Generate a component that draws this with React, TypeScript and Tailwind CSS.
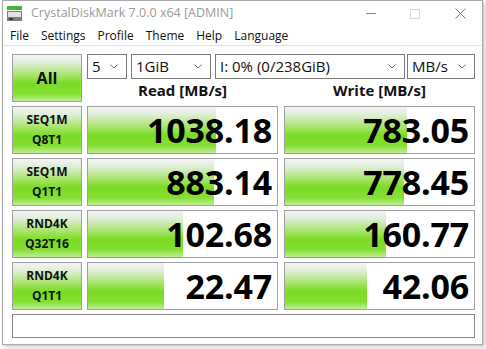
import React from 'react'

const font = { fontFamily: '"Open Sans", "Noto Sans", sans-serif' }

const green =
  'bg-[linear-gradient(to_bottom,#f4f4f4_0%,#e0eed8_16%,#a6e468_44%,#7bdc24_62%,#84df33_84%,#bdee92_100%)]'

type Row = { a: string; b: string; read: string; write: string; rw: number; ww: number }

const rows: Row[] = [
  { a: 'SEQ1M', b: 'Q8T1', read: '1038.18', write: '783.05', rw: 128, ww: 122 },
  { a: 'SEQ1M', b: 'Q1T1', read: '883.14', write: '778.45', rw: 126, ww: 119 },
  { a: 'RND4K', b: 'Q32T16', read: '102.68', write: '160.77', rw: 95, ww: 101 },
  { a: 'RND4K', b: 'Q1T1', read: '22.47', write: '42.06', rw: 76, ww: 82 },
]

function Chevron() {
  return (
    <svg width="8" height="5" viewBox="0 0 8 5" className="shrink-0">
      <polyline points="0.5,0.5 4,4 7.5,0.5" fill="none" stroke="#707070" strokeWidth="1" />
    </svg>
  )
}

function Combo({ w, text, ml }: { w: string; text: string; ml: string }) {
  return (
    <div className={`${w} ${ml} h-[25px] border border-[#7a7a7a] bg-white flex items-center justify-between pl-[4px] pr-[8px] text-[15px] text-[#111]`}>
      <span>{text}</span>
      <Chevron />
    </div>
  )
}

function Value({ text, bar }: { text: string; bar: number }) {
  return (
    <div className="relative w-[191px] h-[48px] border border-[#a0a0a0] bg-white overflow-hidden">
      <div className={`absolute left-0 top-0 bottom-0 ${green}`} style={{ width: bar }} />
      <div className="relative h-full flex items-center justify-end pr-[5px] text-[34px] font-bold text-black leading-none tracking-[-0.2px]">
        {text}
      </div>
    </div>
  )
}

export default function App() {
  return (
    <div className="w-[486px] h-[349px] bg-white overflow-hidden" style={font}>
      <div className="ml-[2px] w-[481px] h-[345px] border border-[#a8a8a8] bg-white flex flex-col shadow-[2px_2px_4px_rgba(0,0,0,0.22)]">
        <div className="h-[22px] flex items-center relative">
          <svg width="15" height="15" viewBox="0 0 15 15" className="ml-[4px] mt-[2px]">
            <rect x="0" y="0" width="15" height="4" fill="#3fb72f" />
            <rect x="0" y="5" width="15" height="10" fill="#7d7d7d" />
            <rect x="1" y="6" width="13" height="5" fill="#e2e2e2" />
            <rect x="2" y="12" width="4" height="2" fill="#3a3a3a" />
          </svg>
          <span className="ml-[9px] mt-[3px] text-[12.5px] text-[#9a9a9a]">CrystalDiskMark 7.0.0 x64 [ADMIN]</span>
          <div className="ml-auto flex items-center mt-[3px]">
            <div className="w-[10px] h-px bg-[#8a8a8a]" />
            <div className="ml-[34px] w-[10px] h-[10px] border border-[#d6d6d6]" />
            <svg width="11" height="11" viewBox="0 0 11 11" className="ml-[35px] mr-[16px]">
              <path d="M0.5 0.5 L10.5 10.5 M10.5 0.5 L0.5 10.5" stroke="#777" strokeWidth="1" />
            </svg>
          </div>
        </div>
        <div className="h-[23px] border-b border-[#e2e2e2] flex items-center pt-[3px] text-[12px] text-[#111] pl-[7px] gap-x-[12px]">
          <span>File</span>
          <span>Settings</span>
          <span>Profile</span>
          <span>Theme</span>
          <span>Help</span>
          <span>Language</span>
        </div>
        <div className="pl-[9px] pt-[8px] flex flex-col gap-y-[4px]">
          <div className="flex gap-x-[5px]">
            <div className={`w-[70px] h-[48px] border border-[#a0a0a0] ${green} flex items-center justify-center text-[16px] font-bold text-[#111]`}>
              All
            </div>
            <div className="w-[388px] flex flex-col">
              <div className="flex">
                <Combo w="w-[40px]" ml="" text="5" />
                <Combo w="w-[80px]" ml="ml-[4px]" text="1GiB" />
                <Combo w="w-[190px]" ml="ml-[4px]" text="I: 0% (0/238GiB)" />
                <Combo w="w-[68px]" ml="ml-[2px]" text="MB/s" />
              </div>
              <div className="flex h-[23px] items-center font-bold text-[15px] text-[#111]">
                <div className="w-[191px] text-center">Read [MB/s]</div>
                <div className="w-[197px] pl-[6px] text-center">Write [MB/s]</div>
              </div>
            </div>
          </div>
          {rows.map((r, i) => (
            <div key={i} className="flex">
              <div className={`w-[70px] h-[48px] border border-[#a0a0a0] ${green} flex flex-col items-center justify-center text-[12px] font-bold text-[#111] leading-[20px]`}>
                <span>{r.a}</span>
                <span>{r.b}</span>
              </div>
              <div className="ml-[5px]">
                <Value text={r.read} bar={r.rw} />
              </div>
              <div className="ml-[6px]">
                <Value text={r.write} bar={r.ww} />
              </div>
            </div>
          ))}
          <div className="w-[463px] h-[24px] border border-[#8a8a8a] bg-white" />
        </div>
      </div>
    </div>
  )
}
